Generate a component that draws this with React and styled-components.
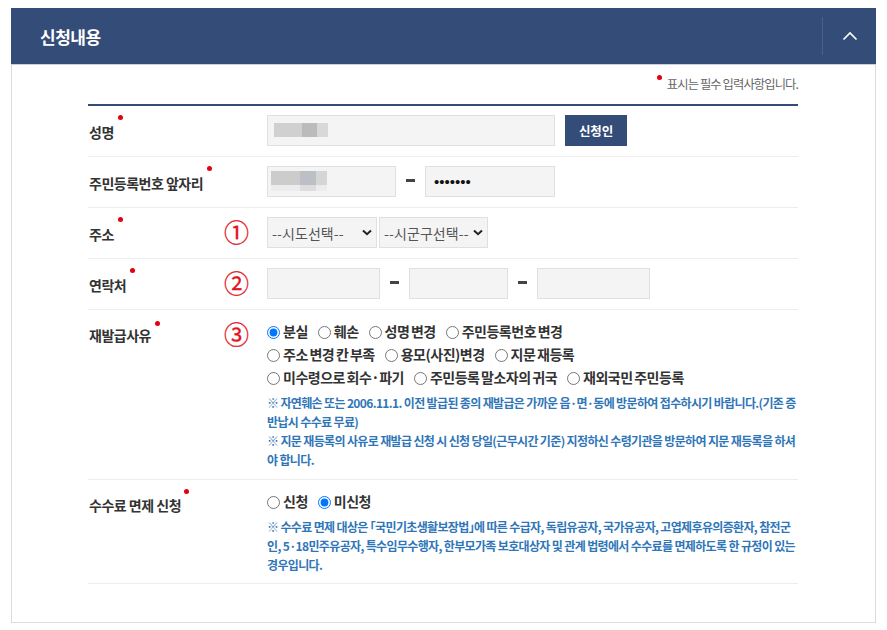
import React from "react";
import styled, { createGlobalStyle } from "styled-components";

const chevron = `url("data:image/svg+xml,%3Csvg xmlns='http://www.w3.org/2000/svg' width='10' height='7' viewBox='0 0 10 7'%3E%3Cpath d='M1 1.500 5 5.200 9 1.500' fill='none' stroke='%23222' stroke-width='2'/%3E%3C/svg%3E")`;

const Global = createGlobalStyle`
  html, body { margin: 0; padding: 0; background: #fff; }
  body { font-family: "Noto Sans CJK KR", "Noto Sans", sans-serif; color: #333; }
  * { box-sizing: border-box; }
`;
const Page = styled.div`
  width: 887px; height: 630px; padding: 8px 11px 7px; overflow: hidden;
`;
const Panel = styled.section`
  width: 865px; height: 615px; display: flex; flex-direction: column;
  border: 1px solid #dcdcdc; border-top: 0;
`;
const Header = styled.header`
  height: 57px; margin: 0 -1px; background: #344c78; border-bottom: 1px solid #c9d0dc;
  display: flex; align-items: center; justify-content: space-between; padding-left: 29px; flex: none;
`;
const Title = styled.h2`
  margin: 0; color: #fff; font-size: 17px; font-weight: 700; letter-spacing: -0.5px; line-height: 1;
`;
const Toggle = styled.button`
  width: 54px; height: 38px; padding: 0; border: 0; border-left: 1px solid #48608a; background: none;
  display: flex; align-items: center; justify-content: center;
`;
const Body = styled.div`
  padding: 0 77px 0 76px; flex: 1;
`;
const Notice = styled.p`
  margin: 0; height: 39px; padding-top: 10px; text-align: right; font-size: 12.300px; line-height: 18px;
  letter-spacing: -0.9px; color: #666;
`;
const Form = styled.div`
  border-top: 2px solid #344c78;
`;
const Row = styled.div`
  display: grid; grid-template-columns: 123px 56px 1fr;
  height: ${p => p.$h}px; border-bottom: 1px solid #eee; padding-top: 9px;
`;
const Label = styled.div`
  font-size: 14px; font-weight: 700; letter-spacing: -0.5px; color: #333; line-height: 18px;
  padding: ${p => p.$pt ?? 8}px 0 0 1px; white-space: nowrap; grid-column: ${p => (p.$wide ? "1 / 3" : "auto")};
`;
const Req = styled.span`
  display: inline-block; width: 5px; height: 5px; border-radius: 50%; background: #e3000f;
  vertical-align: top; margin-left: ${p => p.$ml ?? 4}px; margin-right: ${p => p.$mr ?? 0}px;
  margin-top: ${p => p.$mt ?? -8}px;
`;
const Num = styled.div`
  color: #e2141c; font-size: 25px; line-height: 30px; padding-left: 13px; margin-top: -1px;
  -webkit-text-stroke: 0.3px #e2141c;
`;
const Fields = styled.div`
  display: flex; align-items: center; height: 31px;
`;
const BoxWrap = styled.div`
  position: relative; width: ${p => p.$w}px; height: 31px; flex: none;
`;
const Box = styled.input`
  width: 100%; height: 31px; padding: 0 8px; border: 1px solid #e0e0e0; background: #f4f4f4;
  font-size: 15px; color: #111; font-family: "Liberation Sans", sans-serif; outline: 0; display: block;
`;
const Blur = styled.div`
  position: absolute; left: ${p => p.$left}px; top: ${p => p.$top}px; width: ${p => p.$w}px; height: ${p => p.$h}px;
  filter: blur(0.6px);
  background: linear-gradient(90deg, ${p => p.$c1} 0 52%, ${p => p.$c2} 52% 80%, ${p => p.$c3} 80% 100%);
`;
const Dash = styled.span`
  width: ${p => p.$w}px; flex: none; display: flex; justify-content: center;
  &::before { content: ""; width: 9px; height: 3px; background: #444; margin-top: -3px; }
`;
const PrimaryBtn = styled.button`
  width: 62px; height: 31px; margin-left: 10px; padding: 0; border: 0; background: #344c78; color: #fff;
  font-family: inherit; font-size: 12.500px; font-weight: 700; letter-spacing: -0.2px;
`;
const Select = styled.select`
  appearance: none; height: 31px; width: ${p => p.$w}px; padding: 0 0 0 4px; border: 1px solid #e0e0e0;
  background: #f4f4f4 ${chevron} no-repeat right 4px center;
  color: #555; font-family: inherit; font-size: 14px; letter-spacing: 0.1px; margin-right: 2px; border-radius: 0; outline: 0;
`;
const Options = styled.div`
  padding-top: 1px; line-height: 23px;
`;
const RadioLine = styled.div`
  display: flex; align-items: center; height: 23px; gap: 10px;
`;
const RadioLabel = styled.label`
  display: inline-flex; align-items: center; font-size: 14px; font-weight: 700; letter-spacing: -0.5px;
  word-spacing: -1px; color: #333; white-space: nowrap;
`;
const Radio = styled.input.attrs({ type: "radio" })`
  width: 13px; height: 13px; margin: 1px 3px 0 0; flex: none;
`;
const Help = styled.p`
  margin: ${p => p.$mt ?? 0}px 0 0; font-size: 12px; font-weight: 700; line-height: 19px; letter-spacing: -0.65px;
  color: #2f76b8; width: 536px; word-break: break-all;
`;

const R = ({ n, c, t }) => (
  <RadioLabel>
    <Radio name={n} defaultChecked={c} />
    {t}
  </RadioLabel>
);

export default function App() {
  return (
    <Page>
      <Global />
      <Panel>
        <Header>
          <Title>신청내용</Title>
          <Toggle aria-label="접기">
            <svg width="16" height="10" viewBox="0 0 16 10" fill="none" stroke="#fff" strokeWidth="1.6">
              <path d="M1.500 8.500 8 2l6.500 6.500" />
            </svg>
          </Toggle>
        </Header>
        <Body>
          <Notice><Req $ml={0} $mr={5} $mt={0} />표시는 필수 입력사항입니다.</Notice>
          <Form>
            <Row $h={51}>
              <Label $wide>성명<Req /></Label>
              <Fields>
                <BoxWrap $w={288}>
                  <Box readOnly />
                  <Blur $left={7} $top={8} $w={54} $h={14} $c1="#d0d0d0" $c2="#bbbbbb" $c3="#d8d8d8" />
                </BoxWrap>
                <PrimaryBtn>신청인</PrimaryBtn>
              </Fields>
            </Row>
            <Row $h={51}>
              <Label $wide>주민등록번호 앞자리<Req /></Label>
              <Fields>
                <BoxWrap $w={129}>
                  <Box readOnly />
                  <Blur $left={4} $top={5} $w={56} $h={14} $c1="#cccccc" $c2="#bcbfc5" $c3="#d5d5d5" />
                  <Blur $left={4} $top={19} $w={56} $h={6} $c1="#ececec" $c2="#dddddd" $c3="#ececec" />
                </BoxWrap>
                <Dash $w={29} />
                <BoxWrap $w={130}><Box type="password" readOnly defaultValue="1234567" /></BoxWrap>
              </Fields>
            </Row>
            <Row $h={51}>
              <Label>주소<Req /></Label>
              <Num>①</Num>
              <Fields>
                <Select $w={110}><option>--시도선택--</option></Select>
                <Select $w={109}><option>--시군구선택--</option></Select>
              </Fields>
            </Row>
            <Row $h={51}>
              <Label>연락처<Req /></Label>
              <Num>②</Num>
              <Fields>
                <BoxWrap $w={113}><Box /></BoxWrap>
                <Dash $w={29} />
                <BoxWrap $w={99}><Box /></BoxWrap>
                <Dash $w={29} />
                <BoxWrap $w={113}><Box /></BoxWrap>
              </Fields>
            </Row>
            <Row $h={170}>
              <Label $pt={7}>재발급사유<Req $mt={-5} /></Label>
              <Num>③</Num>
              <Options>
                <RadioLine>
                  <R n="reason" c t="분실" /><R n="reason" t="훼손" /><R n="reason" t="성명 변경" /><R n="reason" t="주민등록번호 변경" />
                </RadioLine>
                <RadioLine>
                  <R n="reason" t="주소 변경 칸 부족" /><R n="reason" t="용모(사진)변경" /><R n="reason" t="지문 재등록" />
                </RadioLine>
                <RadioLine>
                  <R n="reason" t="미수령으로 회수·파기" /><R n="reason" t="주민등록 말소자의 귀국" /><R n="reason" t="재외국민 주민등록" />
                </RadioLine>
                <Help $mt={4}>※ 자연훼손 또는 2006.11.1. 이전 발급된 종의 재발급은 가까운 읍·면·동에 방문하여 접수하시기 바랍니다.(기존 증 반납시 수수료 무료)</Help>
                <Help>※ 지문 재등록의 사유로 재발급 신청 시 신청 당일(근무시간 기준) 지정하신 수령기관을 방문하여 지문 재등록을 하셔야 합니다.</Help>
              </Options>
            </Row>
            <Row $h={104}>
              <Label $wide $pt={7}>수수료 면제 신청<Req $ml={3} $mt={-7} /></Label>
              <Options>
                <RadioLine>
                  <R n="fee" t="신청" /><R n="fee" c t="미신청" />
                </RadioLine>
                <Help $mt={4}>※ 수수료 면제 대상은 ｢국민기초생활보장법｣에 따른 수급자, 독립유공자, 국가유공자, 고엽제후유의증환자, 참전군인, 5·18민주유공자, 특수임무수행자, 한부모가족 보호대상자 및 관계 법령에서 수수료를 면제하도록 한 규정이 있는 경우입니다.</Help>
              </Options>
            </Row>
          </Form>
        </Body>
      </Panel>
    </Page>
  );
}
